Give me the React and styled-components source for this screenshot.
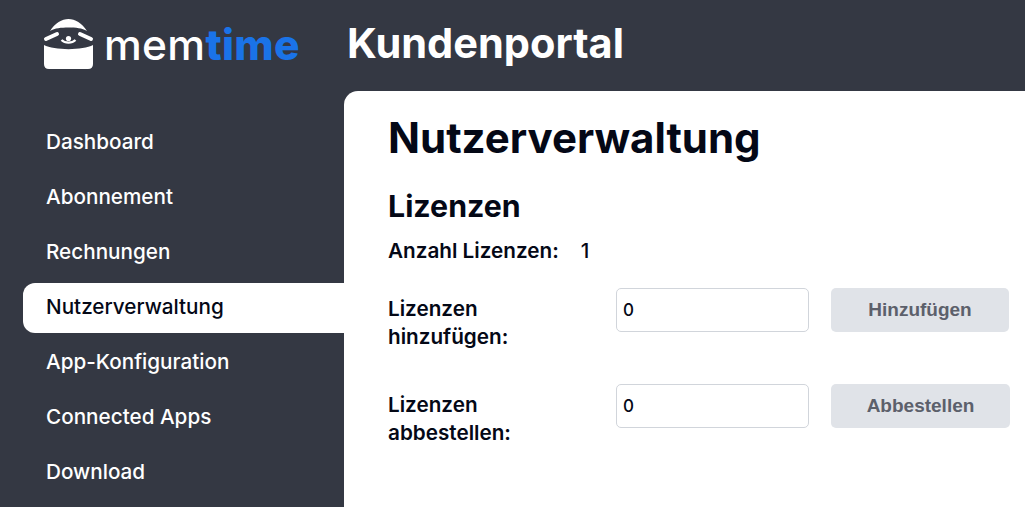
import React from "react";
import styled, { createGlobalStyle } from "styled-components";

const Global = createGlobalStyle`
  html, body { margin: 0; padding: 0; height: 100%; overflow: hidden; background: #343843; }
  #root { height: 100%; }
  * { box-sizing: border-box; }
`;

const font = `Inter, "Liberation Sans", sans-serif`;

const Page = styled.div`
  width: 1025px;
  height: 507px;
  display: grid;
  grid-template-columns: 344px 1fr;
  grid-template-rows: 91px 1fr;
  background: #343843;
  font-family: ${font};
  overflow: hidden;
`;

const Header = styled.header`
  grid-column: 1 / 3;
  display: flex;
  align-items: center;
  padding: 0 0 5px 40px;
`;

const Logo = styled.div`
  display: flex;
  align-items: center;
  width: 307px;
  gap: 4px;
`;

const Wordmark = styled.span`
  font-family: Inter, sans-serif;
  font-size: 42.5px;
  font-weight: 500;
  letter-spacing: 0.3px;
  line-height: 1;
  color: #fff;
  padding-top: 5px;
`;

const WordAccent = styled.span`
  color: #1a73e8;
  font-weight: 800;
`;

const PortalTitle = styled.div`
  color: #fff;
  font-size: 41.5px;
  font-weight: 700;
`;

const Sidebar = styled.nav`
  display: flex;
  flex-direction: column;
  padding: 27px 0 0 23px;
  gap: 5px;
`;

const NavItem = styled.a`
  height: 50px;
  display: flex;
  align-items: center;
  padding: 0 0 4px 23px;
  font-size: 20.7px;
  font-weight: 500;
  border-radius: 12px 0 0 12px;
  color: ${(p) => (p.$active ? "#040816" : "#fff")};
  background: ${(p) => (p.$active ? "#fff" : "transparent")};
`;

const Main = styled.main`
  background: #fff;
  border-top-left-radius: 14px;
  padding: 18px 0 0 44px;
  color: #040816;
`;

const PageTitle = styled.h1`
  margin: 0;
  font-size: 42px;
  line-height: 58px;
  font-weight: 700;
`;

const Section = styled.h2`
  margin: 17px 0 0;
  font-size: 30.3px;
  line-height: 44px;
  font-weight: 700;
`;

const CountRow = styled.div`
  display: flex;
  margin-top: 9px;
  font-size: 20.7px;
  line-height: 28px;
  gap: 22px;
`;

const Strong = styled.span`
  font-weight: 600;
`;

const Plain = styled.span`
  font-weight: 500;
`;

const Form = styled.div`
  margin-top: 23px;
  display: flex;
  flex-direction: column;
  gap: 52px;
`;

const FormRow = styled.div`
  display: grid;
  grid-template-columns: 228px 193px auto;
  align-items: start;
  height: 44px;
`;

const Label = styled.label`
  font-size: 20.7px;
  font-weight: 600;
  line-height: 28px;
  padding-top: 7px;
  width: 170px;
`;

const Input = styled.input`
  width: 193px;
  height: 44px;
  border: 1px solid #d1d5db;
  border-radius: 5px;
  padding: 0 6px;
  font-family: ${font};
  font-size: 17px;
  font-weight: 500;
  color: #040816;
  background: #fff;
  outline: none;
`;

const Button = styled.button`
  margin-left: 22px;
  width: ${(p) => p.$width}px;
  height: 44px;
  border: 0;
  border-radius: 5px;
  background: #e0e3e8;
  color: #5c606b;
  font-family: "Liberation Sans", Arial, sans-serif;
  font-size: 19px;
  font-weight: 700;
`;

function SlothLogo() {
  return (
    <svg width="60" height="58" viewBox="0 0 60 58" aria-hidden="true">
      <path
        fill="#fff"
        d="M10 17 C15 9 22 5 28.5 5 C35 5 42 9 47 17 C42 14 36 13.5 28.5 13.5 C21 13.5 15 14 10 17 Z"
      />
      <path d="M6 25 L17 20" stroke="#fff" strokeWidth="4" strokeLinecap="round" fill="none" />
      <path d="M51 25 L40 20" stroke="#fff" strokeWidth="4" strokeLinecap="round" fill="none" />
      <circle cx="28.5" cy="24.5" r="2.6" fill="#fff" />
      <path d="M21.5 26 C25 29.5 32 29.5 35.5 26" stroke="#fff" strokeWidth="2.2" fill="none" />
      <path
        fill="#fff"
        d="M4 31 C14 36.5 43 36.5 53 31 L53 50 Q53 55 48 55 L9 55 Q4 55 4 50 Z"
      />
    </svg>
  );
}

const items = [
  "Dashboard",
  "Abonnement",
  "Rechnungen",
  "Nutzerverwaltung",
  "App-Konfiguration",
  "Connected Apps",
  "Download",
];

export default function App() {
  return (
    <Page>
      <Global />
      <Header>
        <Logo>
          <SlothLogo />
          <Wordmark>
            mem<WordAccent>time</WordAccent>
          </Wordmark>
        </Logo>
        <PortalTitle>Kundenportal</PortalTitle>
      </Header>
      <Sidebar>
        {items.map((item) => (
          <NavItem key={item} $active={item === "Nutzerverwaltung"}>
            {item}
          </NavItem>
        ))}
      </Sidebar>
      <Main>
        <PageTitle>Nutzerverwaltung</PageTitle>
        <Section>Lizenzen</Section>
        <CountRow>
          <Strong>Anzahl Lizenzen:</Strong>
          <Plain>1</Plain>
        </CountRow>
        <Form>
          <FormRow>
            <Label>Lizenzen hinzufügen:</Label>
            <Input defaultValue="0" />
            <Button $width={178}>Hinzufügen</Button>
          </FormRow>
          <FormRow>
            <Label>Lizenzen abbestellen:</Label>
            <Input defaultValue="0" />
            <Button $width={179}>Abbestellen</Button>
          </FormRow>
        </Form>
      </Main>
    </Page>
  );
}
